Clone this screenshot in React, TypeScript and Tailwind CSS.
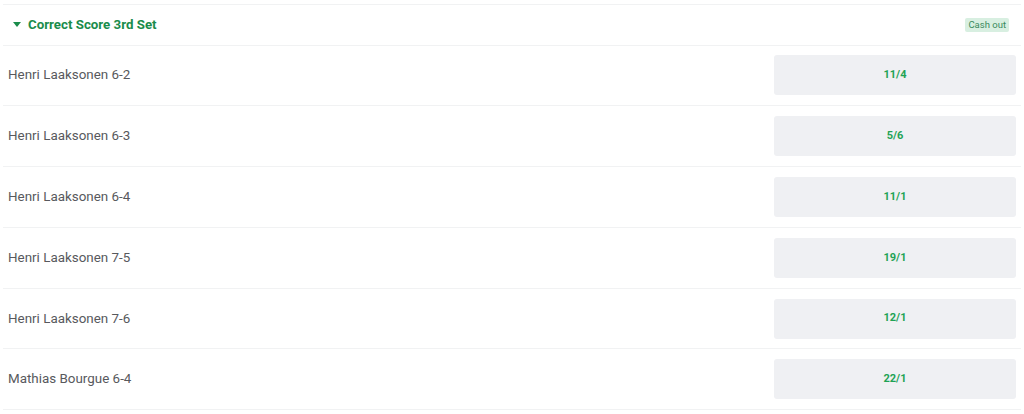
const selections = [
  { name: 'Henri Laaksonen 6-2', odds: '11/4' },
  { name: 'Henri Laaksonen 6-3', odds: '5/6' },
  { name: 'Henri Laaksonen 6-4', odds: '11/1' },
  { name: 'Henri Laaksonen 7-5', odds: '19/1' },
  { name: 'Henri Laaksonen 7-6', odds: '12/1' },
  { name: 'Mathias Bourgue 6-4', odds: '22/1' },
];

export default function App() {
  return (
    <div className="w-[1024px] h-[414px] bg-white overflow-hidden pt-[4px] px-[3px]" style={{ fontFamily: 'Roboto, "Liberation Sans", sans-serif' }}>
      <div className="border-t border-[#f1f2f3]">
        {/* Market header */}
        <div className="h-[40.5px] flex items-center justify-between border-b border-[#f1f2f3] pl-[10px] pr-[12px]">
          <div className="flex items-center gap-[7px]">
            <svg width="8" height="5" viewBox="0 0 8 5" className="fill-[#1a8c4b]">
              <path d="M0 0h8L4 5z" />
            </svg>
            <span className="text-[13.3px] font-bold text-[#1a8c4b]">Correct Score 3rd Set</span>
          </div>
          <span className="bg-[#d8efe1] text-[#3b8a5c] text-[9.5px] leading-[14px] px-[3px] rounded-[2px]">Cash out</span>
        </div>

        {/* Selections */}
        {selections.map((s) => (
          <div key={s.name} className="h-[60.8px] flex items-center justify-between border-b border-[#f1f2f3] pl-[5px] pr-[5px]">
            <span className="text-[13.4px] text-[#58595d]">{s.name}</span>
            <button className="w-[242px] h-[40px] rounded-[3px] bg-[#eff0f3] text-[11px] font-bold text-[#1fa355]">
              {s.odds}
            </button>
          </div>
        ))}
      </div>
    </div>
  );
}
